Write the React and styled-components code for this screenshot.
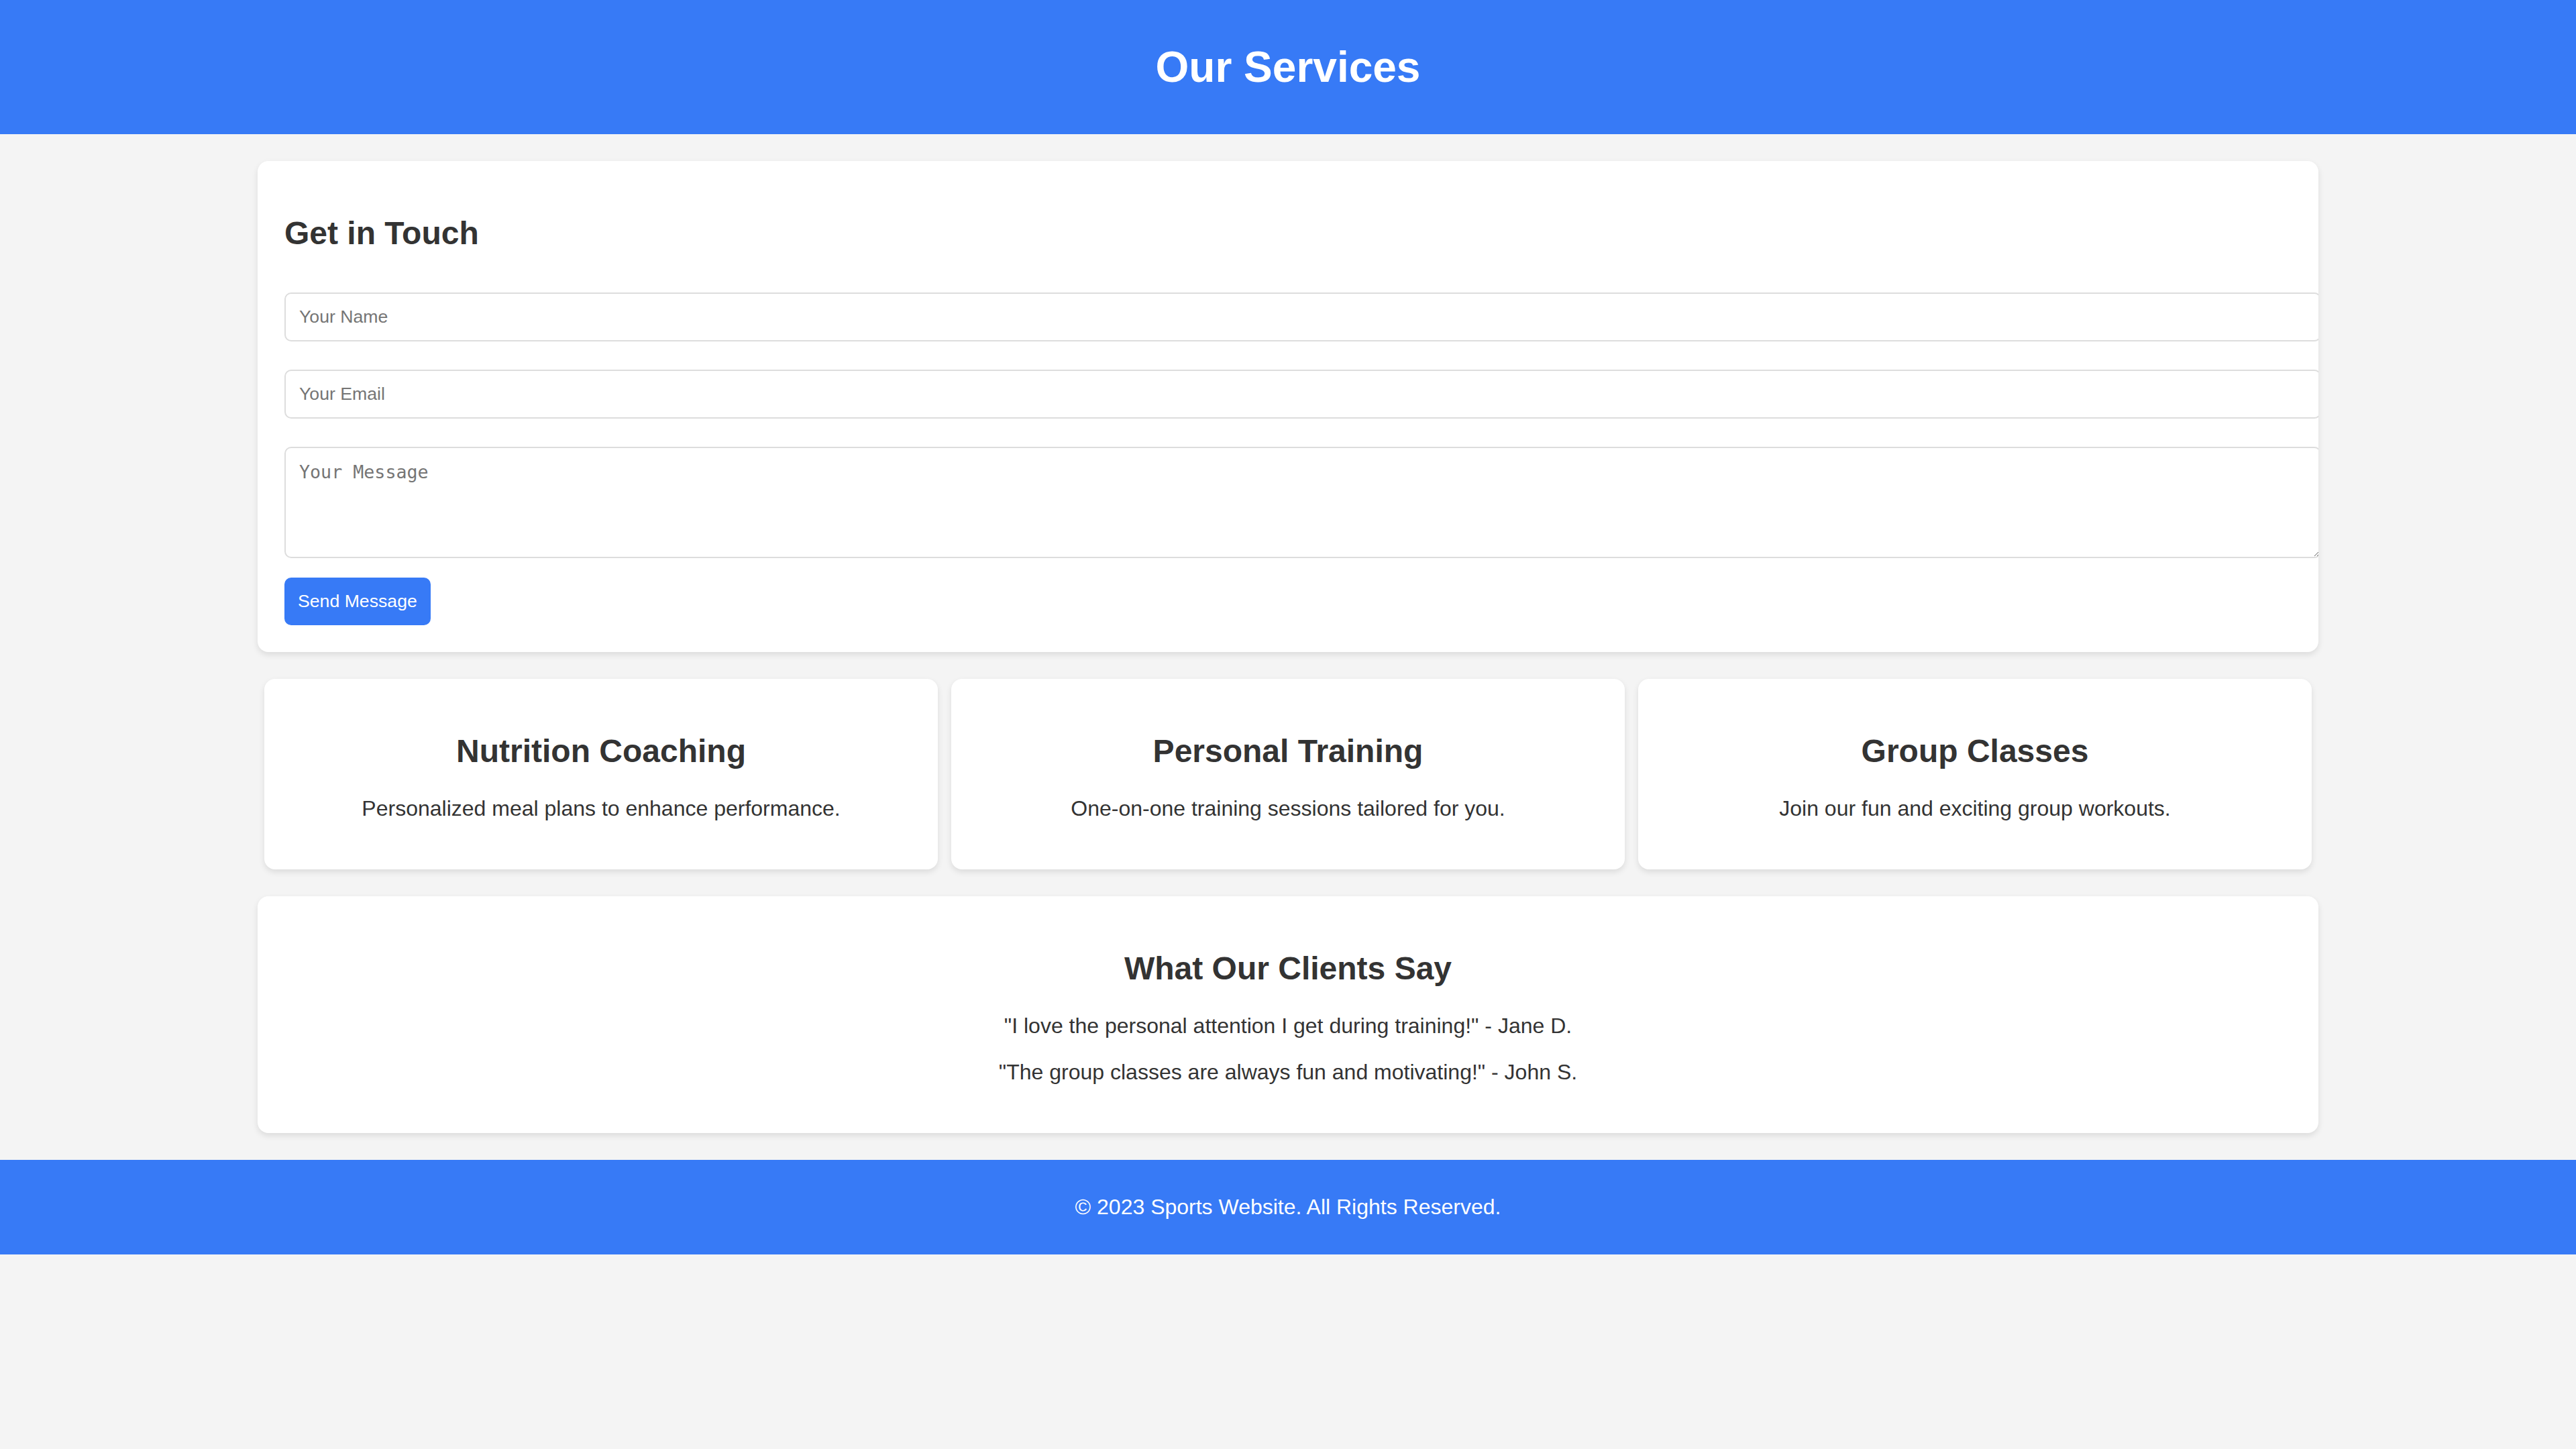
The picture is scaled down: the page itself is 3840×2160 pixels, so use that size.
import React from "react";
import styled, { createGlobalStyle } from "styled-components";

const GlobalStyle = createGlobalStyle`
    body {
        margin: 0;
        background-color: #f4f4f4;
        font-family: "Liberation Sans", Arial, Helvetica, sans-serif;
        color: #333;
    }
`;

const BLUE = "#377af6";

const Header = styled.header`
    background-color: ${BLUE};
    color: #fff;
    text-align: center;
    padding: 20px;

    h1 {
        font-size: 64px;
        margin: 43px 0;
    }
`;

const Main = styled.main`
    width: 80%;
    margin: 40px auto;
`;

const Card = styled.section`
    background: #fff;
    border-radius: 16px;
    padding: 40px;
    box-shadow: 0 4px 10px rgba(0, 0, 0, 0.1);
    overflow: hidden;
    text-align: ${(p) => (p.$center ? "center" : "left")};
    margin: ${(p) => (p.$row ? "0 10px" : "0 0 40px")};
    flex: ${(p) => (p.$row ? 1 : "none")};
`;

const Title = styled.h2`
    font-size: 48px;
    font-weight: bold;
    margin: 40px 0;
    color: #333;
`;

const Text = styled.p`
    font-size: 32px;
    margin: 32px 0;
    color: #333;
`;

const Form = styled.form`
    margin-top: 61px;
`;

const Field = styled.input`
    display: block;
    width: 100%;
    height: 29px;
    padding: 20px;
    margin: 0 0 42px;
    border: 2px solid #ddd;
    border-radius: 10px;
    font-family: "Liberation Sans", Arial, sans-serif;
    font-size: 26.67px;
    color: #333;
    background: #fff;

    &::placeholder {
        color: #757575;
    }
`;

const MessageBox = styled.textarea`
    display: block;
    width: 100%;
    height: 122px;
    padding: 20px;
    margin: 0 0 29px;
    border: 2px solid #ddd;
    border-radius: 10px;
    font-family: "DejaVu Sans Mono", "Liberation Mono", monospace;
    font-size: 26.67px;
    background: #fff;

    &::placeholder {
        color: #757575;
    }
`;

const SendButton = styled.button`
    display: block;
    background-color: ${BLUE};
    color: #fff;
    border: none;
    border-radius: 10px;
    padding: 20px;
    font-family: "Liberation Sans", Arial, sans-serif;
    font-size: 26.67px;
    cursor: pointer;
`;

const ServiceRow = styled.div`
    display: flex;
    margin-bottom: 40px;
`;

const Footer = styled.footer`
    background-color: ${BLUE};
    color: #fff;
    text-align: center;
    padding: 20px;

    p {
        font-size: 32px;
        margin: 32px 0;
    }
`;

const services = [
    { title: "Nutrition Coaching", text: "Personalized meal plans to enhance performance." },
    { title: "Personal Training", text: "One-on-one training sessions tailored for you." },
    { title: "Group Classes", text: "Join our fun and exciting group workouts." },
];

const quotes = [
    "\"I love the personal attention I get during training!\" - Jane D.",
    "\"The group classes are always fun and motivating!\" - John S.",
];

export default function App() {
    return (
        <>
            <GlobalStyle />
            <Header>
                <h1>Our Services</h1>
            </Header>
            <Main>
                <Card>
                    <Title>Get in Touch</Title>
                    <Form onSubmit={(e) => e.preventDefault()}>
                        <Field type="text" placeholder="Your Name" />
                        <Field type="email" placeholder="Your Email" />
                        <MessageBox placeholder="Your Message" />
                        <SendButton type="submit">Send Message</SendButton>
                    </Form>
                </Card>
                <ServiceRow>
                    {services.map((s) => (
                        <Card key={s.title} $row $center>
                            <Title as="h3">{s.title}</Title>
                            <Text>{s.text}</Text>
                        </Card>
                    ))}
                </ServiceRow>
                <Card $center>
                    <Title>What Our Clients Say</Title>
                    {quotes.map((q) => (
                        <Text key={q}>{q}</Text>
                    ))}
                </Card>
            </Main>
            <Footer>
                <p>&copy; 2023 Sports Website. All Rights Reserved.</p>
            </Footer>
        </>
    );
}
